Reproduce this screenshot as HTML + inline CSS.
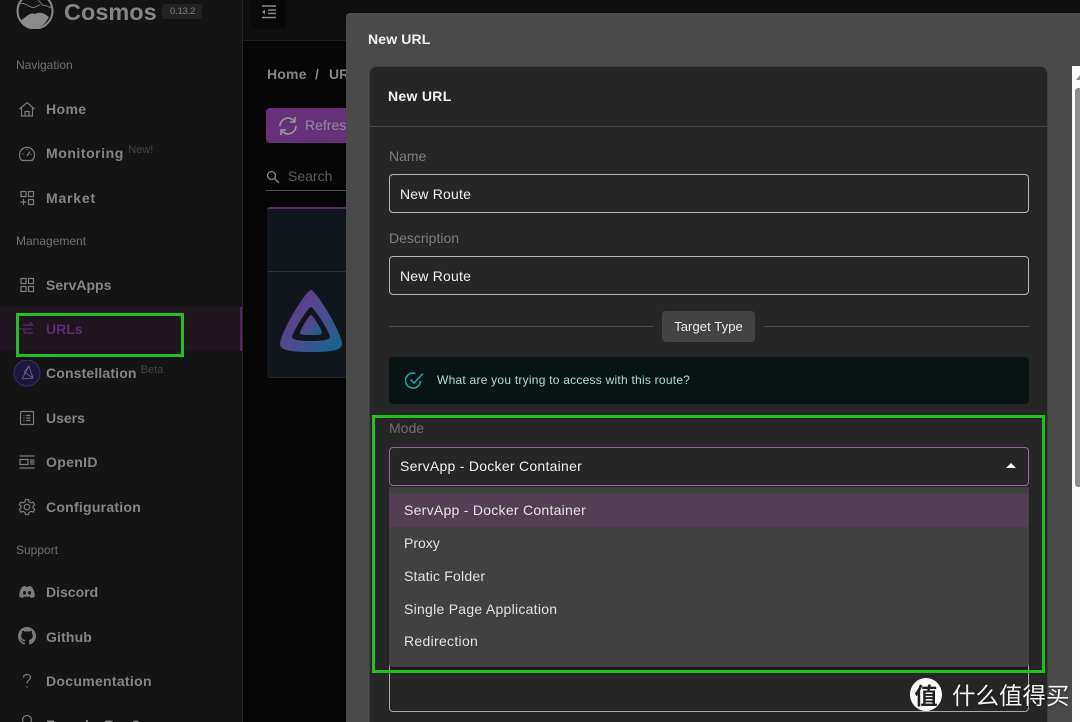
<!DOCTYPE html>
<html><head><meta charset="utf-8"><style>
*{box-sizing:border-box}
html,body{margin:0;padding:0;width:1080px;height:722px;overflow:hidden;background:#060606}
body{position:relative;font-family:"Liberation Sans","Noto Sans CJK SC",sans-serif}
.a{position:absolute}
.t{position:absolute;white-space:nowrap;line-height:20px;height:20px}
.n{left:46px;font-size:14px;font-weight:700;color:#858585}
.s{left:16px;font-size:12px;color:#6f6f6f}
.sup{font-size:11px;color:#454545;font-weight:400;letter-spacing:0}
.i{position:absolute;left:18px;width:18px;height:18px;fill:none;stroke:#7b7b7b;stroke-width:1.2}
.inp{position:absolute;left:389px;width:640px;height:39px;background:#262626;border:1px solid #b5b5b5;border-radius:4px}
.v{left:400px;font-size:14px;color:#f0f0f0}
.l{left:389px;font-size:14px;color:#7d7d7d}
.o{left:404px;font-size:14px;color:#e2e2e2;letter-spacing:.2px}
</style></head><body>
<!-- sidebar -->
<div class="a" style="left:0;top:0;width:243px;height:722px;background:#141414;border-right:1px solid #262626"></div>
<div class="a" style="left:243px;top:40px;width:103px;height:1px;background:#1e1e1e"></div>
<div class="a" style="left:243px;top:0;width:837px;height:40px;background:#0e0e0e"></div>
<div class="a" style="left:251px;top:0;width:35px;height:29px;background:#080808;border-radius:0 0 4px 4px"></div>
<svg class="a" style="left:261px;top:5px" width="16" height="14" fill="none" stroke="#8a8a8a" stroke-width="1.4"><path d="M1 1H15M7 5H15M7 8.500H15M1 12.500H15"/><path d="M1 7L4 4.800V9.200Z" fill="#8a8a8a" stroke="none"/></svg>

<svg class="a" style="left:16px;top:-7px" width="38" height="36" fill="none"><circle cx="19" cy="18" r="17.500" stroke="#8a8a8a" stroke-width="2"/><path d="M5 27C11 24 13 19 19 21C25 18 29 21 33 24C29 32 24 35 19 35C13 35 8 32 5 27Z" fill="#8a8a8a"/><path d="M2 12C8 8 11 13 15 14C19 16 21 12 24 12M22 3C20 8 25 8 26 12C30 13 33 13 35 15" stroke="#777" stroke-width="1"/></svg>
<div class="t" style="left:64px;top:0;height:24px;line-height:24px;font-size:23.500px;font-weight:700;color:#858585">Cosmos</div>
<div class="a" style="left:162px;top:4px;width:40px;height:15px;background:#232323;border-radius:3px"></div>
<div class="t" style="left:170px;top:2px;font-size:9.500px;color:#7d7d7d;letter-spacing:-.2px">0.13.2</div>

<div class="t s" style="top:55px">Navigation</div>
<svg class="i" style="top:100px" viewBox="0 0 18 18"><path d="M1.500 9L9 2.500L16.500 9M3.500 8V16H14.500V8M7 16V11.500H11V16"/></svg>
<div class="t n" style="top:98.500px;letter-spacing:.4px">Home</div>
<svg class="i" style="top:145px" viewBox="0 0 18 18"><path d="M4 15.500A7.500 7.500 0 1 1 14 15.500Z"/><path d="M9 11L12 6.500M4.500 9H5.500M12.500 9.500H13.500M8.500 4.500H9.500"/></svg>
<div class="t n" style="top:143px;letter-spacing:.55px">Monitoring <span class="sup" style="position:relative;top:-5px">New!</span></div>
<svg class="i" style="top:189px" viewBox="0 0 18 18"><path d="M3 2.500H8V7.500H3ZM10.500 2.500H15.500V7.500H10.500ZM10.500 10.500H15.500V15.500H10.500ZM5.500 10V16M2.500 13H8.500"/></svg>
<div class="t n" style="top:187.500px;letter-spacing:.8px">Market</div>

<div class="t s" style="top:231px">Management</div>
<svg class="i" style="top:276px" viewBox="0 0 18 18"><path d="M3 2.500H8V7.500H3ZM10.500 2.500H15.500V7.500H10.500ZM3 10.500H8V15.500H3ZM10.500 10.500H15.500V15.500H10.500Z"/></svg>
<div class="t n" style="top:274.500px">ServApps</div>

<div class="a" style="left:0;top:307px;width:242px;height:44px;background:#20151f;border-right:2px solid #552763"></div>
<svg class="i" style="top:320px;stroke:#5e2a70" viewBox="0 0 18 18"><path d="M5 5H15M12 2L15 5M1 9H14M6 13H15M6 13V9"/></svg>
<div class="t n" style="top:319px;color:#5e2a70">URLs</div>

<svg class="a" style="left:13px;top:360px" width="28" height="28"><circle cx="14" cy="13" r="13" fill="#1c1640" stroke="#3a3468"/><path d="M9 19L16 6L20 18L9 19M11 12L20 18M11 12L16 6" fill="none" stroke="#6d6a80" stroke-width=".8"/></svg>
<div class="t n" style="top:363px;letter-spacing:.15px">Constellation <span class="sup" style="position:relative;top:-5px">Beta</span></div>
<svg class="i" style="top:409px" viewBox="0 0 18 18"><rect x="2.500" y="2.500" width="13" height="13" rx="1"/><path d="M5.500 6.500H6.500M8 6.500H12.500M5.500 9H6.500M8 9H12.500M5.500 11.500H6.500M8 11.500H12.500"/></svg>
<div class="t n" style="top:407.500px">Users</div>
<svg class="i" style="top:453px" viewBox="0 0 18 18"><path d="M1.500 3H16.500M1.500 15H16.500M2 6.500H10V11.500H2ZM12 7H16.500M12 9H16.500M12 11H16.500"/></svg>
<div class="t n" style="top:452px;letter-spacing:.35px">OpenID</div>
<svg class="i" style="top:498px" viewBox="0 0 18 18"><circle cx="9" cy="9" r="2.800"/><path d="M7.500 1.500H10.500L11 3.800L13 4.900L15.200 4.100L16.700 6.700L15 8.200V10L16.700 11.500L15.200 14.100L13 13.300L11 14.400L10.500 16.500H7.500L7 14.400L5 13.300L2.800 14.100L1.300 11.500L3 10V8.200L1.300 6.700L2.800 4.100L5 4.900L7 3.800Z"/></svg>
<div class="t n" style="top:496.500px;letter-spacing:.25px">Configuration</div>

<div class="t s" style="top:540px">Support</div>
<svg class="i" style="top:583px;stroke:none;fill:#7b7b7b" viewBox="0 0 18 18"><path d="M4 4C6 3 7 3 7.500 3L8 4H10L10.500 3C11 3 12 3 14 4C16 7 17 10.500 16.800 13.500C15.500 14.500 14 15 13 15L12 13.500L13 13C11 14 7 14 5 13L6 13.500L5 15C4 15 2.500 14.500 1.200 13.500C1 10.500 2 7 4 4ZM6.500 8C5.500 8 5 9 5 10C5 11 5.700 11.800 6.500 11.800C7.300 11.800 8 11 8 10C8 9 7.500 8 6.500 8ZM11.500 8C10.500 8 10 9 10 10C10 11 10.700 11.800 11.500 11.800C12.300 11.800 13 11 13 10C13 9 12.500 8 11.500 8Z"/></svg>
<div class="t n" style="top:582px">Discord</div>
<svg class="i" style="top:627px;stroke:none;fill:#7b7b7b" viewBox="0 0 16 16"><path d="M8 0C3.580 0 0 3.580 0 8c0 3.540 2.290 6.530 5.470 7.590.4.070.55-.17.55-.38 0-.19-.01-.82-.01-1.490-2.010.37-2.530-.49-2.690-.94-.09-.23-.48-.94-.82-1.130-.28-.15-.68-.52-.01-.53.630-.01 1.080.58 1.230.82.720 1.210 1.870.87 2.330.66.070-.52.280-.87.510-1.070-1.780-.2-3.640-.89-3.640-3.950 0-.87.31-1.590.82-2.150-.08-.2-.36-1.020.08-2.120 0 0 .67-.21 2.200.82.640-.18 1.320-.27 2-.27s1.360.09 2 .27c1.530-1.040 2.200-.82 2.200-.82.44 1.100.16 1.920.08 2.120.51.560.82 1.270.82 2.150 0 3.070-1.870 3.750-3.650 3.950.29.250.54.730.54 1.480 0 1.070-.01 1.930-.01 2.200 0 .21.15.46.55.38A8.010 8.010 0 0 0 16 8c0-4.420-3.580-8-8-8z"/></svg>
<div class="t n" style="top:626.500px;letter-spacing:.15px">Github</div>
<svg class="i" style="top:672px" viewBox="0 0 18 18"><path d="M5.500 5.500C5.500 3.500 7 2.500 9 2.500C11 2.500 12.500 3.700 12.500 5.500C12.500 8 9 8 9 11.500M9 14V15.500"/></svg>
<div class="t n" style="top:671px;letter-spacing:.3px">Documentation</div>
<svg class="i" style="top:714px" viewBox="0 0 18 18"><circle cx="9" cy="6" r="4.500"/></svg>
<div class="t n" style="top:715px">Found a Bug?</div>

<!-- main background -->
<div class="t" style="left:267px;top:64px;font-size:14px;font-weight:700;color:#858585;letter-spacing:.2px">Home</div>
<div class="t" style="left:315px;top:64px;font-size:14px;font-weight:700;color:#858585">/</div>
<div class="t" style="left:329px;top:64px;font-size:14px;font-weight:700;color:#858585">UR</div>
<div class="a" style="left:266px;top:108px;width:80px;height:35px;background:#66307a;border-radius:4px 0 0 4px"></div>
<svg class="a" style="left:278px;top:116px" width="20" height="20" fill="none" stroke="#9a9a9a" stroke-width="1.600"><path d="M2 10A8 8 0 0 1 16 4.800M18 10A8 8 0 0 1 4 15.200"/><path d="M17 1V6H12M3 19V14H8"/></svg>
<div class="t" style="left:305px;top:115px;font-size:14px;color:#8f8f9a">Refres</div>
<svg class="a" style="left:266px;top:170px" width="14" height="14" fill="none" stroke="#8a8a8a" stroke-width="1.300"><circle cx="5.500" cy="5.500" r="4"/><path d="M8.500 8.500L13 13"/></svg>
<div class="t" style="left:288px;top:166px;font-size:14px;color:#5a5a5a">Search</div>
<div class="a" style="left:266px;top:190px;width:80px;height:1px;background:#4e4e4e"></div>
<div class="a" style="left:267px;top:207px;width:79px;height:171px;background:#11151c;border-top:2px solid #5b2a6b;border-bottom:1px solid #2a2a2a;border-radius:3px 0 0 3px"></div>
<div class="a" style="left:268px;top:271px;width:78px;height:1px;background:#2f3238"></div>
<svg class="a" style="left:279px;top:289px" width="64" height="64"><defs><linearGradient id="g" x1="0" y1="0" x2="1" y2="1"><stop offset="0" stop-color="#6b3288"/><stop offset=".55" stop-color="#4a4d8e"/><stop offset="1" stop-color="#0b6a8c"/></linearGradient></defs><path d="M32 1C37 1 63 44 63 55C63 62 49 63 32 63C15 63 1 62 1 55C1 44 27 1 32 1Z" fill="url(#g)"/><path d="M32 18C35 18 51 44 51 48C51 51 42 52 32 52C22 52 13 51 13 48C13 44 29 18 32 18Z" fill="#11151c"/><path d="M32 26C34 26 43 41 43 44C43 46 37 46 32 46C27 46 21 46 21 44C21 41 30 26 32 26Z" fill="url(#g)"/></svg>

<!-- modal -->
<div class="a" style="left:346px;top:13px;width:734px;height:709px;background:#4a4a4a;border-radius:4px 0 0 0"></div>
<div class="t" style="left:368px;top:29px;font-size:14px;font-weight:700;color:#f2f2f2;letter-spacing:.15px">New URL</div>
<div class="a" style="left:369px;top:66px;width:679px;height:656px;background:#262626;border:1px solid #3f3f3f;border-bottom:0;border-radius:8px 8px 0 0"></div>
<div class="t" style="left:388px;top:86px;font-size:14px;font-weight:700;color:#f2f2f2;letter-spacing:.3px">New URL</div>
<div class="a" style="left:370px;top:126px;width:677px;height:1px;background:#484848"></div>
<!-- scrollbar -->
<div class="a" style="left:1072px;top:66px;width:8px;height:656px;background:#fafafa"></div>
<div class="a" style="left:1075px;top:88px;width:5px;height:399px;background:#8e8e8e;border-radius:3px 0 0 3px"></div>
<div class="a" style="left:1076px;top:75px;width:0;height:0;border-left:4px solid transparent;border-bottom:5px solid #8e8e8e"></div>

<div class="t l" style="top:146px">Name</div>
<div class="inp" style="top:174px"></div>
<div class="t v" style="top:183.500px;letter-spacing:.2px">New Route</div>
<div class="t l" style="top:228px">Description</div>
<div class="inp" style="top:256px"></div>
<div class="t v" style="top:265.500px;letter-spacing:.2px">New Route</div>

<div class="a" style="left:389px;top:326px;width:264px;height:1px;background:#4d4d4d"></div>
<div class="a" style="left:764px;top:326px;width:265px;height:1px;background:#4d4d4d"></div>
<div class="a" style="left:662px;top:311px;width:93px;height:31px;background:#434343;border-radius:4px"></div>
<div class="t" style="left:662px;top:317px;width:93px;text-align:center;font-size:13px;color:#ececec;letter-spacing:.1px">Target Type</div>

<div class="a" style="left:389px;top:357px;width:640px;height:47px;background:#081413;border-radius:4px"></div>
<svg class="a" style="left:405px;top:371px" width="20" height="19" fill="none" stroke="#1aa5a5" stroke-width="1.600"><path d="M15.500 10A7.500 7.500 0 1 1 10.500 2.500"/><path d="M5.500 8.500L9 12L18 2.500"/></svg>
<div class="t" style="left:437px;top:370px;font-size:12px;color:#a7e0d8;letter-spacing:.24px">What are you trying to access with this route?</div>

<div class="t l" style="top:418px;color:#6f6f6f">Mode</div>
<div class="inp" style="top:447px;border-color:#9a62a6"></div>
<div class="t v" style="top:455.500px;letter-spacing:.27px">ServApp - Docker Container</div>
<div class="a" style="left:1006px;top:463px;width:0;height:0;border-left:5px solid transparent;border-right:5px solid transparent;border-bottom:5px solid #f0f0f0"></div>

<!-- lower input behind dropdown -->
<div class="a" style="left:389px;top:660px;width:640px;height:52px;border:1px solid #a8a8a8;border-radius:4px"></div>
<!-- dropdown -->
<div class="a" style="left:389px;top:487px;width:640px;height:180px;background:#414141;border-radius:0 0 4px 4px;box-shadow:0 2px 2px rgba(0,0,0,.3)"></div>
<div class="a" style="left:389px;top:494px;width:640px;height:33px;background:#533f54"></div>
<div class="t o" style="top:500px;letter-spacing:.27px">ServApp - Docker Container</div>
<div class="t o" style="top:533px;letter-spacing:0">Proxy</div>
<div class="t o" style="top:566px">Static Folder</div>
<div class="t o" style="top:599px;letter-spacing:.27px">Single Page Application</div>
<div class="t o" style="top:631px;letter-spacing:.3px">Redirection</div>

<!-- green annotations -->
<div class="a" style="left:16px;top:313px;width:168px;height:44px;border:3px solid #22bf22"></div>
<div class="a" style="left:372px;top:415px;width:673px;height:258px;border:3px solid #22bf22"></div>

<!-- watermark -->
<div class="a" style="left:910px;top:678px;width:32px;height:33px;border-radius:50%;background:#fff;color:#222;font-size:23px;line-height:32px;text-align:center;font-weight:700;font-family:'Noto Sans CJK SC',sans-serif">值</div>
<div class="t" style="left:952px;top:678px;height:32px;line-height:32px;font-size:23.500px;color:#f4f4f4;letter-spacing:0;font-family:'Noto Sans CJK SC',sans-serif;text-shadow:0 1px 2px rgba(0,0,0,.5)">什么值得买</div>
</body></html>
